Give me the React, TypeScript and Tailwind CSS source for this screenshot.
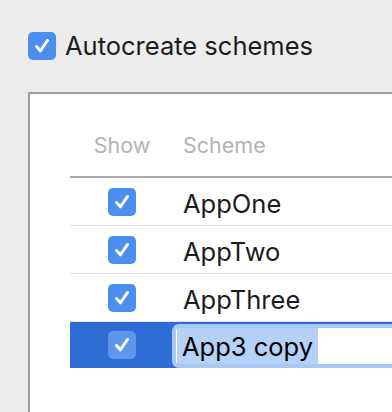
import React from "react";

function Check({ light = false }: { light?: boolean }) {
  return (
    <div
      className={
        "flex h-[28px] w-[28px] items-center justify-center rounded-[5px] " +
        (light ? "bg-[#5c97ec]" : "bg-[#4b8ef0]")
      }
    >
      <svg width="28" height="28" viewBox="0 0 28 28">
        <path
          d="M8.5 14.5 L12.3 18.8 L19.5 8.5"
          fill="none"
          stroke="white"
          strokeWidth="3"
          strokeLinecap="round"
          strokeLinejoin="round"
        />
      </svg>
    </div>
  );
}

const schemes = ["AppOne", "AppTwo", "AppThree"];

export default function App() {
  return (
    <div
      className="flex h-[412px] w-[392px] flex-col overflow-hidden bg-[#ececec]"
      style={{ fontFamily: "Inter, 'Liberation Sans', sans-serif" }}
    >
      {/* Autocreate checkbox */}
      <div className="flex items-center gap-[9px] pl-[28px] pt-[32px]">
        <Check />
        <span className="text-[25.5px] leading-[28px] text-[#1c1c1c]">Autocreate schemes</span>
      </div>

      {/* Scheme table */}
      <div className="ml-[28px] mt-[32px] flex-1 border-l-2 border-t-2 border-[#9b9b9b] bg-white pl-[40px]">
        <div className="flex border-b-2 border-[#ababab] pb-[19px] pt-[39px] text-[21.5px] leading-[24px] text-[#b3b3b3]">
          <div className="w-[104px] text-center">Show</div>
          <div className="pl-[9px]">Scheme</div>
        </div>

        {schemes.map((name) => (
          <div key={name} className="flex h-[48px] items-center border-b border-[#e3e3e3]">
            <div className="flex w-[104px] justify-center">
              <Check />
            </div>
            <div className="pl-[9px] pt-[5px] text-[25.5px] leading-[28px] text-[#1c1c1c]">{name}</div>
          </div>
        ))}

        {/* selected, editing row */}
        <div className="flex h-[46px] bg-[#2d6dd4]">
          <div className="flex w-[102px] items-center justify-center pl-[2px]">
            <Check light />
          </div>
          <div className="ml-[4px] mt-[6px] flex h-[36px] flex-1 items-stretch rounded-l-[3px] bg-white pl-[1px] ring-4 ring-[#a8c8f2]">
            <span className="flex items-center bg-[#b4d1f7] px-[5px] pt-[2px] text-[25.5px] leading-[28px] text-black">
              App3 copy
            </span>
          </div>
        </div>
      </div>
    </div>
  );
}
